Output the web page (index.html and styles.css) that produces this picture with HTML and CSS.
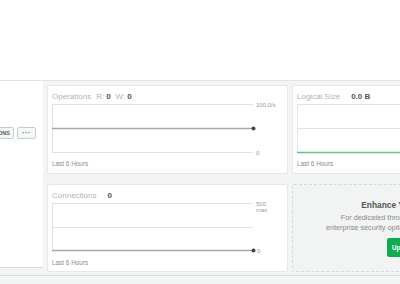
FILE: index.html
```html
<!DOCTYPE html>
<html>
<head>
<meta charset="utf-8">
<link rel="stylesheet" href="styles.css">
</head>
<body>
<div class="top"></div>
<div class="main">
  <aside class="side">
    <div class="btns">
      <button class="btn">COLLECTIONS</button>
      <button class="btn more">&middot;&middot;&middot;</button>
    </div>
  </aside>
  <div class="grid">
    <section class="card">
      <div class="title"><span class="lbl">Operations</span><span class="k">R:</span><b>0</b><span class="k">W:</span><b>0</b></div>
      <svg class="chart" width="236" height="51">
        <line x1="0.5" y1="1" x2="0.5" y2="50" stroke="#e2e2e2"/>
        <line x1="0" y1="1.5" x2="201" y2="1.5" stroke="#e2e2e2"/>
        <line x1="0" y1="49.5" x2="201" y2="49.5" stroke="#e2e2e2"/>
        <line x1="0" y1="25.5" x2="201" y2="25.5" stroke="#a8a8a8" stroke-width="1.5"/>
        <circle cx="201.5" cy="25.5" r="2" fill="#444"/>
        <text x="204" y="4" class="ax">100.0/s</text>
        <text x="204" y="52" class="ax">0</text>
      </svg>
      <div class="foot">Last 6 Hours</div>
    </section>
    <section class="card">
      <div class="title"><span class="lbl">Logical Size</span><b class="wide">0.0 B</b></div>
      <svg class="chart" width="236" height="51">
        <line x1="0.5" y1="1" x2="0.5" y2="50" stroke="#e2e2e2"/>
        <line x1="0" y1="1.5" x2="236" y2="1.5" stroke="#e2e2e2"/>
        <line x1="0" y1="25.5" x2="236" y2="25.5" stroke="#e2e2e2"/>
        <line x1="0" y1="49.5" x2="236" y2="49.5" stroke="#63c48c" stroke-width="1.5"/>
      </svg>
      <div class="foot">Last 6 Hours</div>
    </section>
    <section class="card">
      <div class="title"><span class="lbl">Connections</span><b class="wide">0</b></div>
      <svg class="chart" width="236" height="51">
        <line x1="0.5" y1="1" x2="0.5" y2="50" stroke="#e2e2e2"/>
        <line x1="0" y1="1.5" x2="201" y2="1.5" stroke="#e2e2e2"/>
        <line x1="0" y1="25.5" x2="201" y2="25.5" stroke="#e2e2e2"/>
        <line x1="0" y1="48.5" x2="201" y2="48.5" stroke="#a8a8a8" stroke-width="1.5"/>
        <circle cx="201.5" cy="48.5" r="2" fill="#444"/>
        <text x="204" y="4" class="ax">500</text>
        <text x="204" y="10" class="ax">max</text>
        <text x="205" y="51" class="ax">0</text>
      </svg>
      <div class="foot">Last 6 Hours</div>
    </section>
    <section class="card promo">
      <h3>Enhance Your Experience</h3>
      <p>For dedicated throughput, richer metrics and<br>enterprise security options, upgrade your cluster now!</p>
      <button class="up">Upgrade Now</button>
    </section>
  </div>
</div>
<div class="bottom"></div>
</body>
</html>
```

FILE: styles.css
```css
html, body {
  margin: 0;
  padding: 0;
  background: #f3f4f4;
  font-family: "Liberation Sans", Arial, sans-serif;
  overflow: hidden;
  width: 400px;
  height: 284px;
}
.top {
  height: 80px;
  background: #fff;
}
.main {
  display: flex;
  border-top: 1px solid #e2e4e4;
  background: #f3f4f4;
  height: 194px;
  border-bottom: 1px solid #dcdede;
}
.side {
  width: 43px;
  flex: none;
  height: 186px;
  background: #fff;
  border-bottom: 1px solid #dadcdc;
  overflow: hidden;
  display: flex;
  justify-content: flex-end;
}
.btns {
  display: flex;
  gap: 3px;
  margin-top: 46px;
  padding-right: 7px;
  height: 12px;
}
.btn {
  flex: none;
  height: 12px;
  padding: 0 3px;
  border: 1px solid #c4cfcd;
  border-radius: 2px;
  background: #f6f8f8;
  font-family: inherit;
  font-size: 5.5px;
  font-weight: bold;
  color: #5a5a5a;
  line-height: 10px;
}
.more {
  width: 19px;
  padding: 0;
  font-size: 7px;
  letter-spacing: 0.5px;
}
.grid {
  display: grid;
  grid-template-columns: 241px 241px;
  grid-template-rows: 89px 88px;
  column-gap: 4px;
  row-gap: 10px;
  padding: 4px 0 0 4px;
  flex: none;
}
.card {
  background: #fff;
  border: 1px solid #e6e8e8;
  border-radius: 2px;
  box-sizing: border-box;
  padding: 5px 0 0 4px;
  overflow: hidden;
}
.title {
  height: 12px;
  line-height: 12px;
  font-size: 8px;
  color: #b4b4b4;
  white-space: nowrap;
}
.title .lbl {
  margin-right: 5px;
}
.title .k {
  margin-right: 2px;
}
.title b {
  color: #555;
  font-weight: bold;
  margin-right: 5px;
}
.title b.wide {
  margin-left: 6px;
}
.chart {
  display: block;
  overflow: visible;
}
.ax {
  font-size: 6px;
  fill: #9a9a9a;
  font-family: "Liberation Sans", Arial, sans-serif;
}
.foot {
  margin-top: 5px;
  font-size: 6.4px;
  line-height: 10px;
  color: #8c8c8c;
}
.promo {
  background: #f2f3f3;
  border: 1px dashed #d8dada;
  text-align: center;
  padding: 14px 0 0;
}
.promo h3 {
  margin: 0;
  font-size: 8.4px;
  line-height: 12px;
  font-weight: bold;
  color: #555;
}
.promo p {
  margin: 2px 0 0;
  font-size: 7.3px;
  line-height: 10px;
  color: #8a8a8a;
  white-space: nowrap;
}
.up {
  margin-top: 5px;
  height: 19px;
  border: none;
  border-radius: 2px;
  background: #13aa52;
  color: #fff;
  font-family: inherit;
  font-size: 6.4px;
  font-weight: bold;
  padding: 0 5px;
}
.bottom {
  height: 8px;
  background: #f3f4f4;
}
```
